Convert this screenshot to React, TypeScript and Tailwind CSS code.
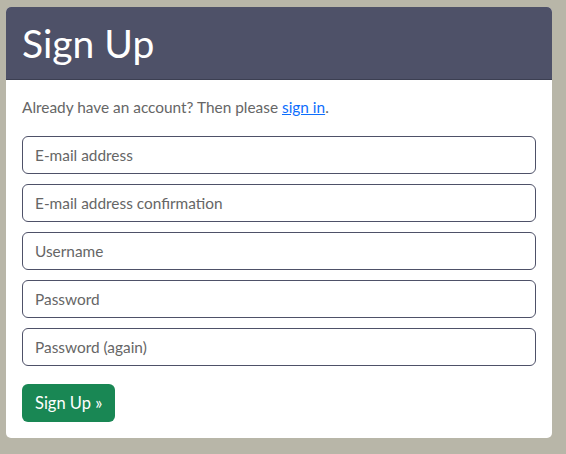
export default function App() {
  const fields = [
    'E-mail address',
    'E-mail address confirmation',
    'Username',
    'Password',
    'Password (again)',
  ];

  return (
    <div className="min-h-[454px] bg-[#b8b6a8] pt-[7px] pl-[6px] pr-[14px] pb-[17px] font-['Lato','Noto_Sans',sans-serif]">
      <div className="bg-white rounded-[5px] overflow-hidden">
        <div className="bg-[#4e5168] border-b border-[#3c3f52] h-[73px] px-4 flex items-center">
          <h1 className="text-white text-[39px] leading-none">Sign Up</h1>
        </div>
        <div className="px-4 pt-[16px] pb-[16px]">
          <p className="text-[#666] text-[15.4px] leading-[22px]">
            Already have an account? Then please{' '}
            <a href="#" className="text-[#0d6efd] underline">sign in</a>.
          </p>
          <form className="mt-[18px] flex flex-col gap-[10px]">
            {fields.map((f) => (
              <input
                key={f}
                type={f.startsWith('Password') ? 'password' : 'text'}
                placeholder={f}
                className="h-[38px] w-full rounded-[6px] border border-[#4e5168] px-3 text-[15.4px] placeholder:text-[#666] outline-none"
              />
            ))}
            <div className="mt-[8px]">
              <button
                type="button"
                className="h-[38px] px-[13px] rounded-[6px] bg-[#198754] text-white text-[16.5px]"
              >
                Sign Up »
              </button>
            </div>
          </form>
        </div>
      </div>
    </div>
  );
}
